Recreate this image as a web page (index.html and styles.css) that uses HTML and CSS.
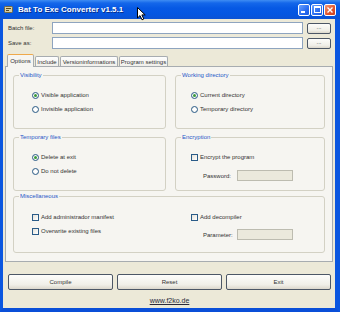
FILE: index.html
```html
<!DOCTYPE html>
<html>
<head>
<meta charset="utf-8">
<link rel="stylesheet" href="styles.css">
</head>
<body>
<div class="window">
  <div class="titlebar">
    <svg class="app-icon" width="9" height="9" viewBox="0 0 9 9">
      <rect x="0.5" y="1.5" width="8" height="6" rx="1" fill="#d8cfa8" stroke="#7a6a3a" stroke-width="1"/>
      <rect x="2" y="3" width="5" height="1" fill="#5a4a20"/>
      <rect x="2" y="5" width="3" height="1" fill="#5a4a20"/>
    </svg>
    <span class="title">Bat To Exe Converter v1.5.1</span>
    <div class="controls">
      <span class="ctl min"><span class="min-bar"></span></span>
      <span class="ctl max"><span class="max-box"></span></span>
      <span class="ctl close">
        <svg width="8" height="8" viewBox="0 0 8 8"><path d="M1.5 1.5 L6.5 6.5 M6.5 1.5 L1.5 6.5" stroke="#fff" stroke-width="1.4"/></svg>
      </span>
    </div>
  </div>
  <div class="frame">
    <div class="files">
      <span class="lbl">Batch file:</span><span class="input"></span><span class="btn small">...</span>
      <span class="lbl">Save as:</span><span class="input"></span><span class="btn small">...</span>
    </div>
    <div class="tabs">
      <span class="tab active t-options">Options</span>
      <span class="tab t-include">Include</span>
      <span class="tab t-version">Versioninformations</span>
      <span class="tab t-program">Program settings</span>
    </div>
    <div class="panel">
      <fieldset class="group row1 leftg">
        <legend>Visibility</legend>
        <div class="items">
          <div class="item"><span class="radio on"></span>Visible application</div>
          <div class="item"><span class="radio"></span>Invisible application</div>
        </div>
      </fieldset>
      <fieldset class="group row1 rightg">
        <legend>Working directory</legend>
        <div class="items">
          <div class="item"><span class="radio on"></span>Current directory</div>
          <div class="item"><span class="radio"></span>Temporary directory</div>
        </div>
      </fieldset>
      <fieldset class="group row2 leftg">
        <legend>Temporary files</legend>
        <div class="items">
          <div class="item"><span class="radio on"></span>Delete at exit</div>
          <div class="item"><span class="radio"></span>Do not delete</div>
        </div>
      </fieldset>
      <fieldset class="group row2 rightg">
        <legend>Encryption</legend>
        <div class="items wide">
          <div class="item"><span class="check"></span>Encrypt the program</div>
          <div class="field"><span class="flbl">Password:</span><span class="input disabled"></span></div>
        </div>
      </fieldset>
      <fieldset class="group row3 misc">
        <legend>Miscellaneous</legend>
        <div class="misc-cols">
          <div class="items">
            <div class="item"><span class="check"></span>Add administrador manifest</div>
            <div class="item"><span class="check"></span>Overwrite existing files</div>
          </div>
          <div class="items wide right">
            <div class="item"><span class="check"></span>Add decompiler</div>
            <div class="field"><span class="flbl">Parameter:</span><span class="input disabled"></span></div>
          </div>
        </div>
      </fieldset>
    </div>
    <div class="actions">
      <span class="btn big">Compile</span>
      <span class="btn big">Reset</span>
      <span class="btn big">Exit</span>
    </div>
    <div class="linkrow"><a class="link">www.f2ko.de</a></div>
  </div>
  <svg class="cursor" width="10" height="14" viewBox="0 0 10 14">
    <path d="M0.5 0.5 L0.5 11 L3 8.6 L5 12.8 L6.8 12 L4.9 7.9 L8.2 7.9 Z" fill="#fff" stroke="#000" stroke-width="1" stroke-linejoin="round"/>
  </svg>
</div>
</body>
</html>
```
FILE: styles.css
```css
* { box-sizing: border-box; }
html, body { margin: 0; padding: 0; }
body {
  width: 340px;
  height: 312px;
  overflow: hidden;
  font-family: "Liberation Sans", Arial, sans-serif;
  font-size: 6px;
  color: #333;
  background: #0a56e0;
}
.window {
  position: relative;
  width: 340px;
  height: 312px;
  display: flex;
  flex-direction: column;
}
.titlebar {
  height: 19px;
  flex: none;
  display: flex;
  align-items: center;
  padding-left: 4px;
  background: linear-gradient(#3f8df3 0, #1467ea 3px, #0759e4 8px, #0456e2 14px, #0b52d4 19px);
}
.app-icon { flex: none; margin-right: 5px; }
.title {
  color: #fff;
  font-weight: bold;
  font-size: 8px;
  text-shadow: 1px 1px 0 #0a2f8a;
}
.controls {
  margin-left: auto;
  margin-right: 4px;
  display: flex;
  gap: 1px;
}
.ctl {
  width: 12px;
  height: 12px;
  border: 1px solid #fff;
  border-radius: 2px;
  position: relative;
  display: flex;
  align-items: center;
  justify-content: center;
  background: linear-gradient(135deg, #6aa2ff, #2a6cf0 60%, #1c5ae0);
}
.ctl.close { background: linear-gradient(135deg, #f29a78, #e2532c 60%, #c8401e); }
.min-bar {
  position: absolute;
  left: 2px;
  bottom: 2px;
  width: 4px;
  height: 2px;
  background: #fff;
}
.max-box {
  width: 7px;
  height: 7px;
  border: 1px solid #fff;
  border-top-width: 2px;
}
.frame {
  flex: 1;
  display: flex;
  flex-direction: column;
  background: #ece9d8;
  border-left: 3px solid #0a56e0;
  border-right: 5px solid #0a56e0;
  border-bottom: 4px solid #0a4fd8;
  padding: 3px 4px 0 5px;
}
.files {
  display: grid;
  grid-template-columns: 44px 251px 24px;
  column-gap: 0;
  row-gap: 3px;
  grid-auto-rows: 12px;
  align-items: center;
}
.files .btn { margin-left: 4px; height: 11px; width: 24px; }
.lbl { color: #333; }
.input {
  display: block;
  height: 12px;
  background: #fff;
  border: 1px solid #8ea4bf;
}
.input.disabled {
  background: #ebe9dc;
  border-color: #bdbcb0;
  width: 56px;
  height: 11px;
}
.btn {
  display: flex;
  align-items: center;
  justify-content: center;
  border: 1px solid #4c5766;
  border-radius: 2px;
  background: linear-gradient(#fdfdfb, #f0efe8 70%, #dcd8cc);
  color: #333;
}
.btn.small { font-size: 6px; line-height: 1; padding-bottom: 2px; }
.tabs {
  margin-top: 5px;
  margin-left: -1px;
  height: 12px;
  display: flex;
  align-items: flex-end;
  gap: 1px;
  position: relative;
  z-index: 1;
}
.tab {
  height: 10px;
  display: flex;
  align-items: center;
  justify-content: center;
  border: 1px solid #a7acb0;
  border-bottom: none;
  border-radius: 2px 2px 0 0;
  background: linear-gradient(#fefefe, #f0efea);
  color: #333;
  white-space: nowrap;
}
.t-options { width: 27px; }
.t-include { width: 24px; }
.t-version { width: 58px; }
.t-program { width: 49px; }
.tab.active {
  height: 13px;
  margin-bottom: -1px;
  background: #f6f5f1;
  border-top: 1px solid #efa94a;
}
.panel {
  height: 196px;
  margin: 0 -2px 0 -3px;
  border: 1px solid #a7acb0;
  background: #f6f5f1;
  display: grid;
  grid-template-columns: 153px 150px;
  grid-template-rows: 57px 62px 62px;
  column-gap: 9px;
  row-gap: 0;
  padding: 5px 7px 0 7px;
  align-content: start;
}
.row2 { margin-top: 5px; }
.row3 { margin-top: 2px; }
fieldset.group {
  margin-left: 0;
  margin-right: 0;
  margin-bottom: 0;
  padding: 0;
  min-width: 0;
  border: 1px solid #d3d1c4;
  border-radius: 3px;
}
legend {
  font-size: 6px;
  line-height: 7px;
  color: #1f55c8;
  margin-left: 5px;
  padding: 0 1px;
}
.misc { grid-column: 1 / 3; }
.items {
  display: flex;
  flex-direction: column;
  gap: 4px;
  padding-top: 11px;
}
.leftg .items { padding-left: 18px; }
.rightg .items { padding-left: 15px; }
.item {
  display: flex;
  align-items: center;
  gap: 2px;
  height: 10px;
  white-space: nowrap;
}
.radio {
  width: 7px;
  height: 7px;
  border-radius: 50%;
  border: 1px solid #2a5b88;
  background: radial-gradient(circle, #fff 40%, #e6e4dc);
  display: flex;
  align-items: center;
  justify-content: center;
}
.radio.on::after {
  content: "";
  width: 3px;
  height: 3px;
  border-radius: 50%;
  background: #3a9a3a;
}
.check {
  width: 7px;
  height: 7px;
  border: 1px solid #2a5b88;
  background: linear-gradient(135deg, #e4e2da, #fff);
}
.items.wide { gap: 8px; }
.field {
  display: flex;
  align-items: center;
  height: 11px;
  padding-left: 12px;
}
.flbl { width: 34px; color: #333; }
.misc-cols {
  display: grid;
  grid-template-columns: 162px 1fr;
}
.misc-cols .items { padding-left: 18px; padding-top: 12px; }
.misc-cols .items.right { padding-left: 15px; gap: 7px; }
.actions {
  margin-top: 12px;
  display: grid;
  grid-template-columns: repeat(3, 1fr);
  column-gap: 4px;
}
.btn.big { height: 16px; }
.linkrow {
  margin-top: 7px;
  display: flex;
  justify-content: center;
}
.link {
  font-size: 7px;
  color: #2a2a3a;
  text-decoration: underline;
}
.cursor {
  position: absolute;
  left: 137px;
  top: 7px;
}
```
